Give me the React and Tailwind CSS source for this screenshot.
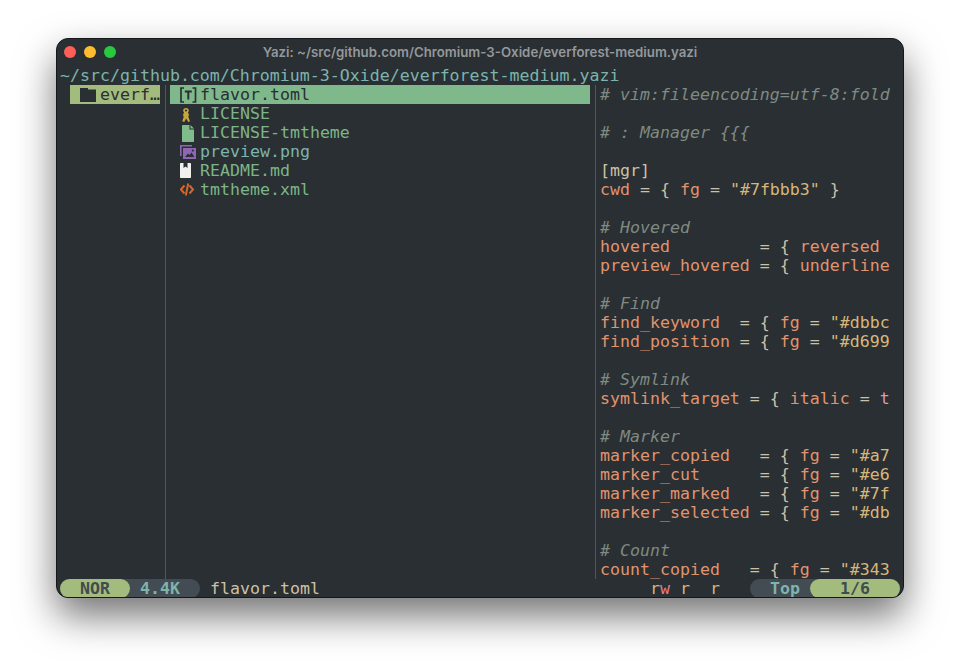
const MONO = "font-['DejaVu_Sans_Mono','Liberation_Mono',monospace]";

const files = [
  { name: "flavor.toml", icon: "toml", active: true },
  { name: "LICENSE", icon: "license", color: "text-[#7bb588]" },
  { name: "LICENSE-tmtheme", icon: "file", color: "text-[#7bb588]" },
  { name: "preview.png", icon: "image", color: "text-[#7bb5ad]" },
  { name: "README.md", icon: "readme", color: "text-[#7bb588]" },
  { name: "tmtheme.xml", icon: "code", color: "text-[#7bb588]" },
];

function FileIcon({ type }) {
  if (type === "toml")
    return (
      <svg width="18" height="19" viewBox="0 0 18 19" fill="none" stroke="#2a2f33" strokeWidth="1.7">
        <path d="M4 3H1V17H4M12.5 3H15.5V17H12.5" />
        <path d="M4.8 6.4H11.8M8.3 6.4V14.5" strokeWidth="2" />
      </svg>
    );
  if (type === "license")
    return (
      <svg width="18" height="19" viewBox="0 0 18 19" fill="#c4a83e">
        <path
          fillRule="evenodd"
          d="M6 4C7.8 4 8.8 5.2 8.8 6.6C8.8 7.5 8.4 8.2 7.9 8.7L9 10.5L8.4 13L10 17.2L8.2 18L6.2 14.6L4.2 18L2.2 17.2L3.7 13L3 10.5L4.1 8.7C3.6 8.2 3.2 7.5 3.2 6.6C3.2 5.2 4.2 4 6 4ZM6 5.6C5.4 5.6 5 6 5 6.6C5 7.2 5.4 7.6 6 7.6C6.6 7.6 7 7.2 7 6.6C7 6 6.6 5.6 6 5.6Z"
        />
      </svg>
    );
  if (type === "file")
    return (
      <svg width="18" height="19" viewBox="0 0 18 19" fill="#7fbb8b">
        <path d="M2 3C2 2.4 2.4 2 3 2H9.5V6.5H14V18C14 18.6 13.6 19 13 19H3C2.4 19 2 18.6 2 18Z" />
        <path d="M10.5 2L14 5.5H10.5Z" />
      </svg>
    );
  if (type === "image")
    return (
      <svg width="18" height="19" viewBox="0 0 18 19" fill="none">
        <path d="M0 3H12V4.6H1.6V14H0Z" fill="#8f66b3" />
        <path fillRule="evenodd" d="M3 6H16V17H3ZM5 15H14.5L11.5 10.5L9.5 13L8 11.5Z" fill="#8f66b3" />
        <circle cx="12.8" cy="8.6" r="1.1" fill="#2a2f33" />
      </svg>
    );
  if (type === "readme")
    return (
      <svg width="18" height="19" viewBox="0 0 18 19" fill="#f0f0ee">
        <path d="M0 3C0 2.4 .4 2 1 2H3.5V7L5.5 5.5L7.5 7V2H10C10.6 2 11 2.4 11 3V16C11 16.6 10.6 17 10 17H1C.4 17 0 16.6 0 16Z" />
      </svg>
    );
  return (
    <svg width="18" height="19" viewBox="0 0 18 19" fill="none" stroke="#d2682d" strokeWidth="2">
      <path d="M4.5 5.5L1 9.5L4.5 13.5M9.5 5.5L13 9.5L9.5 13.5M8.2 3.5L5.8 15.5" />
    </svg>
  );
}

// one token = [text, colour class]
const o = "text-[#e0946f]";
const f = "text-[#cdc1a5]";
const y = "text-[#d6b77b]";
const p = "text-[#d699b6]";

const kv = (key, ...rest) => [[key, o], [" = { ", f], ...rest];
const fg = (key, val) => kv(key, ["fg", o], [" = ", f], [val, y]);
const comment = (text) => [[text, "text-[#7f8a82] italic"]];

const preview = [
  comment("# vim:fileencoding=utf-8:fold"),
  [],
  comment("# : Manager {{{"),
  [],
  [["[mgr]", f]],
  [["cwd", o], [" = { ", f], ["fg", o], [" = ", f], ['"#7fbbb3"', y], [" }", f]],
  [],
  comment("# Hovered"),
  kv("hovered        ", ["reversed", o]),
  kv("preview_hovered", ["underline", o]),
  [],
  comment("# Find"),
  fg("find_keyword ", '"#dbbc'),
  fg("find_position", '"#d699'),
  [],
  comment("# Symlink"),
  kv("symlink_target", ["italic", o], [" = ", f], ["t", p]),
  [],
  comment("# Marker"),
  fg("marker_copied  ", '"#a7'),
  fg("marker_cut     ", '"#e6'),
  fg("marker_marked  ", '"#7f'),
  fg("marker_selected", '"#db'),
  [],
  comment("# Count"),
  fg("count_copied  ", '"#343'),
];

export default function App() {
  return (
    <div className="w-[960px] h-[672px] bg-white overflow-hidden pt-[38px] px-[56px]">
      <div
        className={`w-[848px] h-[560px] rounded-[12px] bg-[#2a2f33] border border-[#15181a] overflow-hidden shadow-[0_18px_38px_rgba(0,0,0,0.55)] text-[16.6px] leading-[19px] ${MONO}`}
      >
        {/* title bar */}
        <div className="relative h-[27px] flex items-center justify-center">
          <div className="absolute left-[7px] top-[7px] flex gap-[8px]">
            <span className="w-[12px] h-[12px] rounded-full bg-[#ff5f57]" />
            <span className="w-[12px] h-[12px] rounded-full bg-[#febc2e]" />
            <span className="w-[12px] h-[12px] rounded-full bg-[#28c840]" />
          </div>
          <span className="font-['Inter',sans-serif] font-semibold text-[13.25px] text-[#94989a]">
            Yazi: ~/src/github.com/Chromium-3-Oxide/everforest-medium.yazi
          </span>
        </div>

        {/* path */}
        <div className="h-[19px] pl-[3px] text-[#7bb5ad] whitespace-pre">
          ~/src/github.com/Chromium-3-Oxide/everforest-medium.yazi
        </div>

        {/* panes */}
        <div className="flex h-[494px]">
          <div className="w-[109px] pl-[13px] shrink-0 border-r border-[#4f585e]">
            <div className="w-[90px] h-[19px] bg-[#a3bb7d] text-[#2a2f33] flex whitespace-pre">
              <span className="w-[30px] pl-[10px] flex items-center">
                <svg width="16" height="14" viewBox="0 0 16 14" fill="#2a2f33">
                  <path d="M0 0H8V1.5H16V14H0Z" />
                </svg>
              </span>
              everf…
            </div>
          </div>

          <div className="w-[430px] shrink-0 pl-[4px] border-r border-[#4f585e]">
            <div className="w-[420px]">
              {files.map((file) => (
                <div
                  key={file.name}
                  className={`h-[19px] flex whitespace-pre ${file.active ? "bg-[#7fb88a] text-[#2a2f33]" : file.color}`}
                >
                  <span className="w-[30px] pl-[10px] flex items-center">
                    <FileIcon type={file.icon} />
                  </span>
                  {file.name}
                </div>
              ))}
            </div>
          </div>

          <div className="pl-[4px] w-[294px] overflow-hidden">
            {preview.map((line, i) => (
              <div key={i} className="h-[19px] whitespace-pre">
                {line.map(([text, cls], j) => (
                  <span key={j} className={cls}>
                    {text}
                  </span>
                ))}
              </div>
            ))}
          </div>
        </div>

        {/* status bar */}
        <div className="h-[19px] flex items-center pl-[3px] pr-[3px] whitespace-pre">
          <div className="flex bg-[#434c52] rounded-[9.5px] w-[140px]">
            <span className="w-[70px] text-center bg-[#a3bb7d] text-[#414b50] font-bold rounded-[9.5px]">NOR</span>
            <span className="w-[70px] pl-[10px] text-[#7bb5ad] font-bold">4.4K</span>
          </div>
          <span className="ml-[10px] text-[#cdc1a5]">flavor.toml</span>
          <span className="ml-auto text-[#d6b77b]">r</span>
          <span className="text-[#e67e80]">w</span>
          <span className="text-[#d6b77b]"> r  r</span>
          <div className="ml-[30px] flex bg-[#434c52] rounded-[9.5px] w-[150px]">
            <span className="w-[60px] pl-[20px] text-[#7bb5ad] font-bold">Top</span>
            <span className="w-[90px] text-center bg-[#a3bb7d] text-[#414b50] font-bold rounded-[9.5px]">1/6</span>
          </div>
        </div>
      </div>
    </div>
  );
}
